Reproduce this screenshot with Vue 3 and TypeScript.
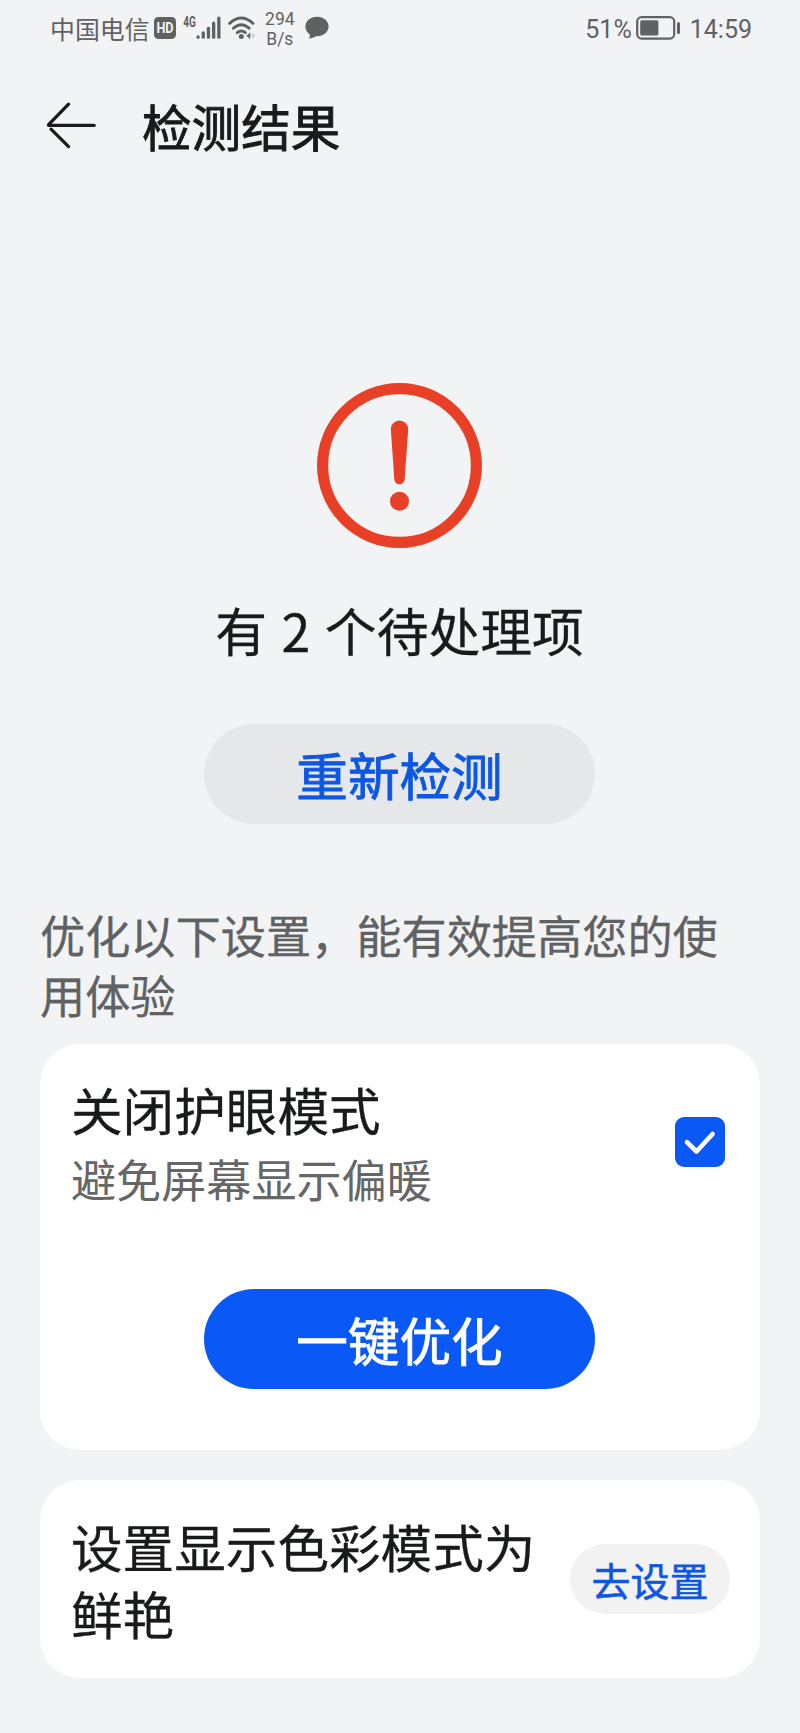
<script setup lang="ts">
import { ref } from 'vue'

const speed = { value: '294', unit: 'B/s' }
const battery = 51
const time = '14:59'
const pending = 2
const eyeModeSelected = ref<boolean>(true)
const bars = [
  { x: 0.2, top: 19.2 },
  { x: 5.4, top: 15.2 },
  { x: 10.6, top: 10.7 },
  { x: 15.8, top: 5.6 },
  { x: 21, top: 0.5 },
]
</script>

<template>
  <main class="screen">
    <header class="status">
      <div class="status-left">
        <span class="carrier">中国电信</span>
        <svg class="hd" width="22" height="22" viewBox="0 0 22 22">
          <rect width="22" height="22" rx="4.5" fill="#606163" />
          <text x="2.4" y="16" textLength="17.2" lengthAdjust="spacingAndGlyphs" class="hd-text">HD</text>
        </svg>
        <svg class="signal" width="38" height="24" viewBox="0 0 38 24">
          <text x="0.2" y="11" textLength="12.6" lengthAdjust="spacingAndGlyphs" class="net-text">4G</text>
          <g transform="translate(13.2 0)">
            <rect
              v-for="b in bars"
              :key="b.x"
              :x="b.x"
              :y="b.top"
              width="3.3"
              :height="22.8 - b.top"
              rx="1.5"
              fill="#606163"
            />
          </g>
        </svg>
        <svg class="wifi" width="28" height="24" viewBox="0 0 28 24">
          <g fill="none" stroke="#606163" stroke-width="2.9" stroke-linecap="round">
            <path d="M1.6 7.4Q13.3 -3.2 25 7.4" />
            <path d="M5.5 12.2Q13.3 5.2 21.1 12.2" />
            <path d="M9.2 16.6Q13.3 13.2 17.4 16.6" />
          </g>
          <circle cx="13.3" cy="20.5" r="2.5" fill="#606163" />
          <path d="M22.3 16.6V23L18.4 19.8Z" fill="#606163" />
          <path d="M24 16.8V22.8L27.4 19.8Z" fill="#c9cacc" />
        </svg>
        <div class="speed">
          <span>{{ speed.value }}</span>
          <span>{{ speed.unit }}</span>
        </div>
        <svg class="bubble" width="24" height="24" viewBox="0 0 24 24">
          <path
            d="M12 .8C5.4 .8 .4 5.1 .4 10.6C.4 14 2.2 17 5 18.7C5.2 20.3 4.6 21.5 3.7 22.4C6.8 22.4 9.2 21.4 11 20.3C18.2 20.6 23.6 16.3 23.6 10.6C23.6 5.1 18.6 .8 12 .8Z"
            fill="#606163"
          />
        </svg>
      </div>
      <div class="status-right">
        <span class="num">{{ battery }}%</span>
        <svg class="battery" width="45" height="24" viewBox="0 0 45 24">
          <rect x="1.2" y="1.2" width="37" height="21.4" rx="4.4" fill="none" stroke="#606163" stroke-width="2.2" />
          <rect x="4.2" y="4.3" width="18.2" height="15.2" rx="1.6" fill="#606163" />
          <rect x="41" y="6" width="3" height="12" rx="1.5" fill="#606163" />
        </svg>
        <span class="num">{{ time }}</span>
      </div>
    </header>

    <nav class="titlebar">
      <svg width="50" height="48" viewBox="0 0 50 48" fill="none" stroke="#191a1c" stroke-width="3.2" stroke-linecap="round">
        <path d="M48.2 24.3H2.6" />
        <path d="M22.6 3.2L2.6 23.6" />
        <path d="M22.6 45.6L5 28.2" />
      </svg>
      <h1>检测结果</h1>
    </nav>

    <section class="result">
      <svg width="165" height="165" viewBox="0 0 165 165">
        <circle cx="82.5" cy="82.5" r="76.9" fill="none" stroke="#e84026" stroke-width="11.2" />
        <path
          d="M73.8 46.1A8.7 8.7 0 0 1 91.2 46.1L87.7 96A5.2 5.2 0 0 1 77.3 96Z"
          fill="#e84026"
        />
        <circle cx="82.5" cy="118.2" r="9.5" fill="#e84026" />
      </svg>
      <p>有 {{ pending }} 个待处理项</p>
      <button class="pill pill-gray">重新检测</button>
    </section>

    <p class="hint">优化以下设置，能有效提高您的使用体验</p>

    <section class="card card-optimize">
      <div class="row">
        <div>
          <h2>关闭护眼模式</h2>
          <p class="sub">避免屏幕显示偏暖</p>
        </div>
        <button
          class="check"
          role="checkbox"
          :aria-checked="eyeModeSelected"
          aria-label="关闭护眼模式"
          @click="eyeModeSelected = !eyeModeSelected"
        >
          <svg v-if="eyeModeSelected" width="50" height="50" viewBox="0 0 50 50">
            <path d="M12 25.2L21.5 34.5L37.6 17" fill="none" stroke="#fff" stroke-width="4.6" stroke-linecap="round" stroke-linejoin="round" />
          </svg>
        </button>
      </div>
      <button class="pill pill-blue">一键优化</button>
    </section>

    <section class="card card-color">
      <h2>设置显示色彩模式为鲜艳</h2>
      <button class="go">去设置</button>
    </section>
  </main>
</template>

<style>
body {
  background: #f2f3f5;
}
</style>

<style scoped>
.screen {
  box-sizing: border-box;
  width: 800px;
  height: 1733px;
  padding: 0 40px;
  overflow: hidden;
  background: #f2f3f5;
  color: #191a1c;
  font-family: 'Noto Sans CJK SC', sans-serif;
}
h1,
h2,
p {
  margin: 0;
  font-weight: 400;
}
h2,
.result p,
.hint {
  -webkit-text-stroke: 0.3px currentColor;
}
svg {
  display: block;
  flex: none;
  overflow: visible;
}
button {
  display: block;
  padding: 0;
  border: 0;
  font-family: inherit;
  font-weight: 400;
  -webkit-text-stroke: 0.9px currentColor;
}
.status {
  display: flex;
  justify-content: space-between;
  height: 56px;
  padding: 0 8px 0 10px;
  color: #606163;
}
.status-left,
.status-right {
  display: flex;
  align-items: center;
}
.carrier {
  font-size: 24.9px;
  line-height: 56px;
  white-space: nowrap;
}
.hd {
  margin-left: 4px;
}
.hd-text,
.net-text {
  font-family: Roboto, sans-serif;
  font-weight: 700;
}
.hd-text {
  font-size: 14px;
  fill: #f2f3f5;
}
.net-text {
  font-size: 15px;
  fill: #606163;
}
.signal {
  margin-left: 7px;
}
.wifi {
  margin-left: 7px;
}
.speed {
  display: flex;
  flex-direction: column;
  align-items: center;
  margin-left: 9.5px;
  padding-top: 2px;
  font: 400 17.5px/20px Roboto, sans-serif;
}
.bubble {
  margin-left: 10.5px;
}
.num {
  padding-top: 3px;
  font: 400 25px/56px Roboto, sans-serif;
}
.battery {
  margin: 0 9px 0 4px;
}
.titlebar {
  display: flex;
  align-items: center;
  gap: 46px;
  height: 138px;
  padding-left: 6px;
  margin-bottom: 189px;
}
.titlebar h1 {
  font-size: 49.6px;
  line-height: 72px;
  -webkit-text-stroke: 0.9px currentColor;
}
.result {
  display: flex;
  flex-direction: column;
  align-items: center;
  margin-right: 1px;
}
.result p {
  margin: 45px 0 57px;
  font-size: 51.8px;
  line-height: 74px;
  word-spacing: 3px;
  white-space: nowrap;
}
.pill {
  width: 391px;
  height: 100px;
  border-radius: 50px;
  font-size: 51.6px;
  line-height: 100px;
  text-align: center;
}
.pill-gray {
  background: #e5e7e9;
  color: #0d57e4;
}
.pill-blue {
  margin-left: 133px;
  background: #0a59f7;
  color: #fff;
}
.hint {
  margin: 81px 0 19px;
  color: #606163;
  font-size: 45.2px;
  line-height: 60px;
}
.card {
  box-sizing: border-box;
  border-radius: 40px;
  background: #fff;
}
.card-optimize {
  height: 406px;
  padding: 31px 35px 0 31px;
}
.row {
  display: flex;
  align-items: center;
  justify-content: space-between;
  height: 134px;
  margin-bottom: 80px;
}
h2 {
  font-size: 51.6px;
  line-height: 67.5px;
}
.row h2 {
  padding-top: 3px;
}
.sub {
  padding-top: 4px;
  color: #666;
  font-size: 45.1px;
  line-height: 66px;
}
.check {
  width: 50px;
  height: 50px;
  border-radius: 9px;
  background: #0a59f7;
}
.card-color {
  display: flex;
  align-items: center;
  justify-content: space-between;
  height: 198px;
  margin-top: 30px;
  padding: 0 30px 0 31px;
}
.card-color h2 {
  width: 475px;
}
.go {
  width: 160px;
  height: 70px;
  border-radius: 35px;
  background: #f2f2f3;
  color: #0d57e4;
  font-size: 39px;
  line-height: 71px;
  text-align: center;
  -webkit-text-stroke-width: 0.6px;
}
</style>
